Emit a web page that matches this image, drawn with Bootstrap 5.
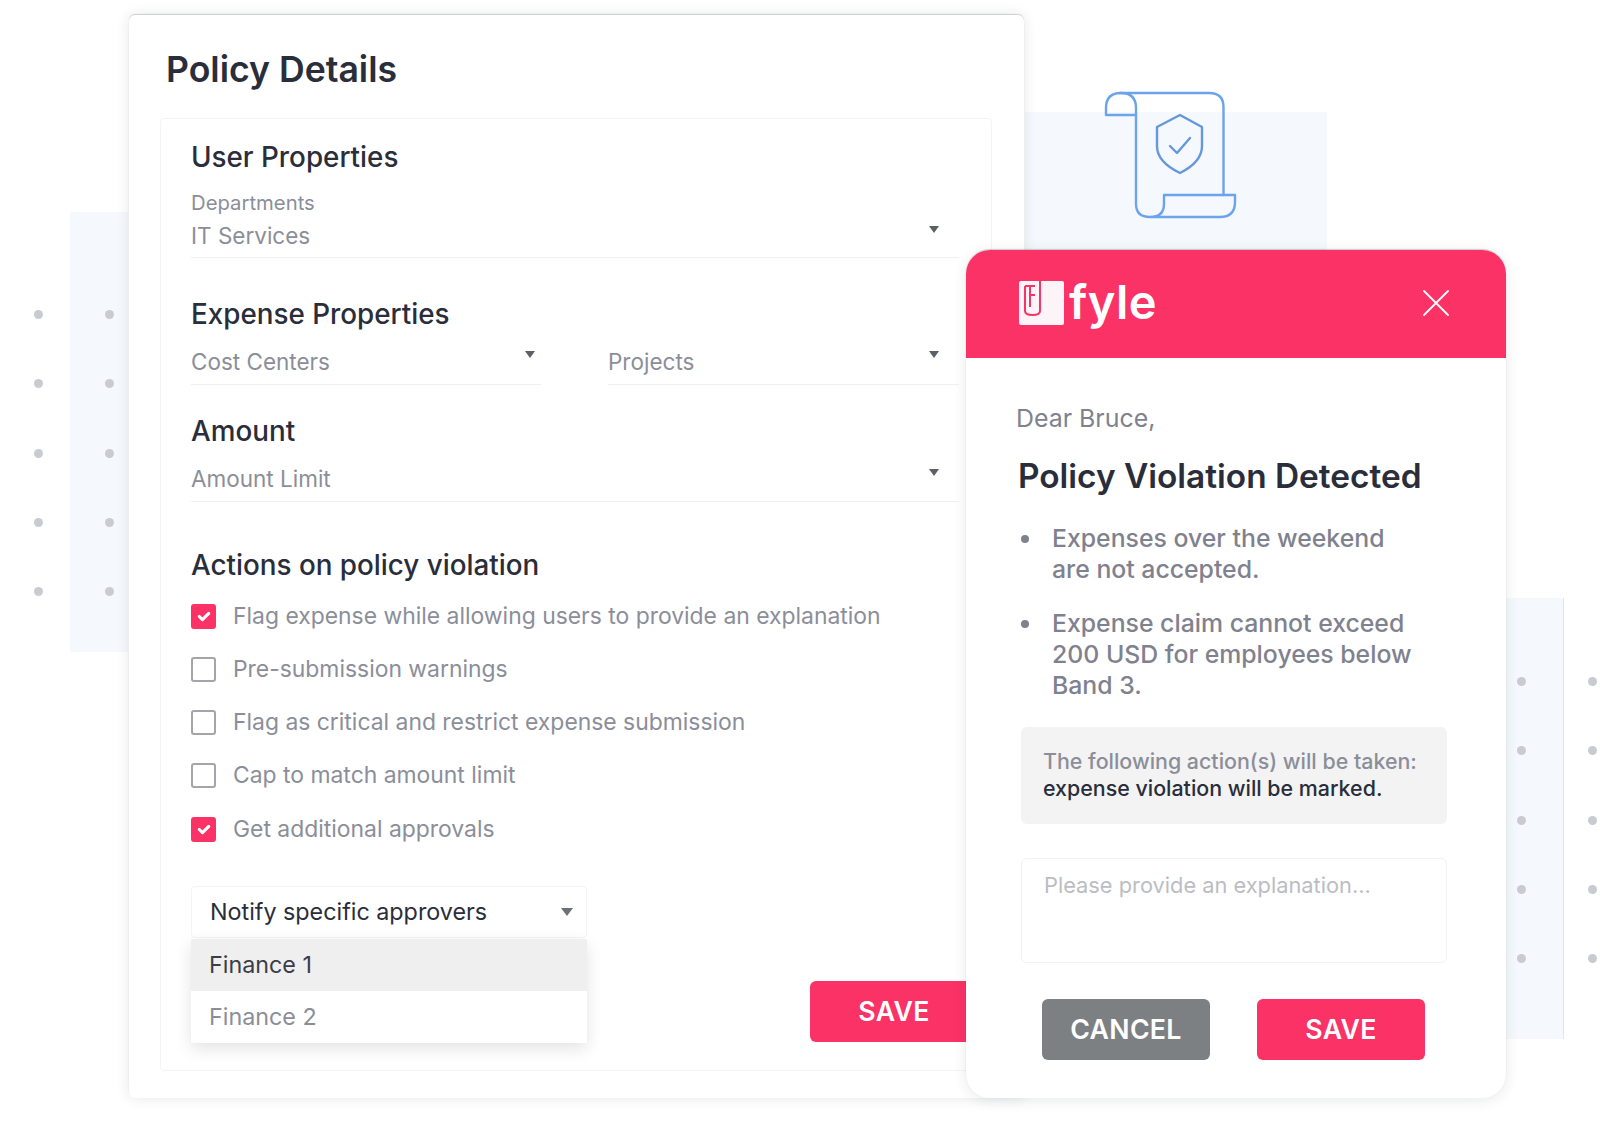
<!DOCTYPE html>
<html lang="en">
<head>
<meta charset="utf-8">
<title>Policy Details</title>
<link href="https://cdn.jsdelivr.net/npm/bootstrap@5.3.2/dist/css/bootstrap.min.css" rel="stylesheet">
<style>
body { margin: 0; background: #fff; font-family: Inter, "Noto Sans", sans-serif; color: #2a2d3a; }
.stage { position: relative; width: 1600px; height: 1132px; overflow: hidden; }

/* backdrop pieces and windows sit on a free canvas */
.strip { position: absolute; background: #f5f9fd; }
.strip-left { left: 70px; top: 212px; width: 58px; height: 440px; }
.strip-right { left: 1506px; top: 598px; width: 58px; height: 441px; border-right: 1px solid #e2e5e9; }
.strip-top { left: 1025px; top: 112px; width: 302px; height: 138px; }
.dots { position: absolute; display: grid; grid-template-columns: 9px 9px; column-gap: 62px; row-gap: 60.25px; }
.dots i { width: 9px; height: 9px; border-radius: 50%; background: #c9cbd1; display: block; }
.dots-left { left: 34px; top: 310px; }
.dots-right { left: 1517px; top: 677px; }
.scroll-art { position: absolute; left: 1100px; top: 88px; }

.policy-win { position: absolute; left: 129px; top: 15px; width: 895px; height: 1083px; background: #fff; border-radius: 6px;
  box-shadow: 0 -1px 1px rgba(30, 35, 50, .18), 0 0 14px rgba(30, 35, 50, .11); padding: 33px 32px 0 31px; }
.policy-title { font-size: 35.6px; line-height: 44px; font-weight: 600; margin: 0 0 26px 6px; color: #2a2d3a; }
.policy-box { width: 832px; height: 953px; border: 1px solid #f3f4f6; border-radius: 4px; padding: 21px 32px 0 30px; }
.sec-head { font-size: 27.8px; line-height: 34px; font-weight: 500; margin: 0; color: #2a2d3a; }
.mt-a { margin-top: 39px; }
.mt-b { margin-top: 29px; }
.mt-c { margin-top: 46px; }
.field-label { font-size: 20.3px; line-height: 26px; color: #8b8e99; margin-top: 16px; }
.field-line { display: flex; justify-content: space-between; align-items: flex-start; font-size: 22.5px; line-height: 30px; color: #8b8e99;
  padding-bottom: 7px; border-bottom: 1px solid #eef0f2; }
.field-first { margin-top: 5px; padding-bottom: 6px; }
.field-cost { width: 350px; flex: none; margin-right: 67px; }
.caret-mark { width: 0; height: 0; border-left: 5px solid transparent; border-right: 5px solid transparent; border-top: 7px solid #5c5f66; margin: 5px 20px 0 0; flex: none; }
.field-pair .caret-mark { margin-top: 4px; }
.field-cost .caret-mark { margin-right: 6px; }
.act-list { margin-top: 8px; }
.act-row { height: 53px; display: flex; align-items: center; gap: 17px; font-size: 22.9px; color: #8b8e99; }
.act-row:last-child { height: 54px; }
.act-row .form-check-input { width: 25px; height: 25px; margin: 0; flex: none; border: 2px solid #a3a5aa; border-radius: 3px; }
.act-row .form-check-input:checked { background-color: #fb3265; border-color: #fb3265; }
.notify-row { display: flex; align-items: flex-end; margin-top: 30px; }
.notify-col { width: 396px; flex: none; }
.notify-pick { height: 52px; display: flex; align-items: center; justify-content: space-between; padding: 0 13px 0 18px; font-size: 23.3px; color: #2a2d3a;
  border: 1px solid #f3f4f6; border-radius: 4px; }
.notify-pick .caret-mark { border-left-width: 6px; border-right-width: 6px; border-top-width: 8px; margin: 0; border-top-color: #6d7076; }
.notify-menu { margin-top: 1px; box-shadow: 0 6px 16px rgba(30, 35, 50, .12); border-radius: 2px; }
.notify-menu .list-group-item { height: 52px; display: flex; align-items: center; padding: 0 18px; font-size: 23.3px; border: 0; color: #8b8e99; }
.notify-menu .list-group-item.picked { background: #efefef; color: #3a3d48; }
.act-btn { width: 168px; height: 61px; padding: 0; border: 0; border-radius: 6px; font-size: 26.7px; font-weight: 600; color: #fff; letter-spacing: .3px; }
.act-btn:hover { color: #fff; }
.btn-pink { background: #fb3265; }
.btn-grey { background: #7d8083; }
.save-under { margin-left: 223px; margin-bottom: 1px; flex: none; }

.notice-win { position: absolute; left: 966px; top: 250px; width: 540px; height: 848px; background: #fff; border-radius: 24px;
  box-shadow: 0 -1px 1px rgba(30, 35, 50, .2), 0 2px 14px rgba(30, 35, 50, .1); overflow: hidden; }
.notice-head { height: 108px; background: #fb3265; display: flex; align-items: center; justify-content: space-between; padding: 0 56px 2px 53px; }
.brand { display: flex; align-items: center; gap: 5px; }
.brand-word { font-size: 47px; line-height: 44px; font-weight: 600; color: #fff; letter-spacing: .5px; margin-top: -3px; }
.notice-body { padding: 45px 59px 0 50px; }
.greet { font-size: 24.9px; line-height: 30px; color: #7f828e; }
.notice-title { font-size: 33.4px; line-height: 42px; font-weight: 600; margin: 22px 0 0 2px; white-space: nowrap; color: #2a2d3a; }
.rule-list { margin: 26px 0 0 0; padding: 0; list-style: none; font-size: 24.8px; line-height: 31px; color: #7f828e; font-weight: 500; }
.rule-list li { display: flex; margin-bottom: 23px; }
.rule-list li:last-child { margin-bottom: 0; }
.rule-dot { width: 8px; height: 8px; border-radius: 50%; background: #7f828e; flex: none; margin: 12px 23px 0 5px; }
.taken-box { margin: 26px 0 0 5px; width: 426px; height: 97px; background: #f3f3f4; border-radius: 6px; padding: 21px 10px 0 22px; font-size: 21.4px; line-height: 27px; color: #8b8e99; font-weight: 500; }
.taken-box b { font-weight: 500; color: #2a2d3a; display: block; }
.explain-box { display: block; margin: 34px 0 0 5px; width: 426px; height: 105px; border: 1px solid #f1f2f4; border-radius: 6px; padding: 13px 22px; font-size: 21.8px; line-height: 27px; resize: none; outline: 0; box-shadow: none; }
.explain-box::placeholder { color: #bcbdc3; }
.notice-btns { display: flex; gap: 47px; margin: 36px 0 0 26px; }
</style>
</head>
<body>
<div class="stage">
  <div class="strip strip-left"></div>
  <div class="strip strip-right"></div>
  <div class="strip strip-top"></div>
  <div class="dots dots-left"><i></i><i></i><i></i><i></i><i></i><i></i><i></i><i></i><i></i><i></i></div>
  <div class="dots dots-right"><i></i><i></i><i></i><i></i><i></i><i></i><i></i><i></i><i></i><i></i></div>

  <main class="policy-win">
    <h1 class="policy-title">Policy Details</h1>
    <div class="policy-box">
      <h2 class="sec-head">User Properties</h2>
      <div class="field-label">Departments</div>
      <div class="field-line field-first"><span>IT Services</span><span class="caret-mark"></span></div>

      <h2 class="sec-head mt-a">Expense Properties</h2>
      <div class="d-flex mt-3 field-pair">
        <div class="field-line field-cost"><span>Cost Centers</span><span class="caret-mark"></span></div>
        <div class="field-line flex-grow-1"><span>Projects</span><span class="caret-mark"></span></div>
      </div>

      <h2 class="sec-head mt-b">Amount</h2>
      <div class="field-line mt-3"><span>Amount Limit</span><span class="caret-mark"></span></div>

      <h2 class="sec-head mt-c">Actions on policy violation</h2>
      <div class="act-list">
        <label class="act-row"><input class="form-check-input" type="checkbox" checked>Flag expense while allowing users to provide an explanation</label>
        <label class="act-row"><input class="form-check-input" type="checkbox">Pre-submission warnings</label>
        <label class="act-row"><input class="form-check-input" type="checkbox">Flag as critical and restrict expense submission</label>
        <label class="act-row"><input class="form-check-input" type="checkbox">Cap to match amount limit</label>
        <label class="act-row"><input class="form-check-input" type="checkbox" checked>Get additional approvals</label>
      </div>

      <div class="notify-row">
        <div class="notify-col">
          <div class="notify-pick"><span>Notify specific approvers</span><span class="caret-mark"></span></div>
          <ul class="list-group notify-menu">
            <li class="list-group-item picked">Finance 1</li>
            <li class="list-group-item">Finance 2</li>
          </ul>
        </div>
        <button class="btn act-btn btn-pink save-under">SAVE</button>
      </div>
    </div>
  </main>

  <svg class="scroll-art" width="140" height="135" viewBox="1100 88 140 135" fill="none" stroke="#6ba3ee" stroke-width="2.4" stroke-linejoin="round" stroke-linecap="round">
    <path d="M1120 93H1209Q1223.5 93 1223.5 107V195"/>
    <path d="M1136 115V204Q1136 217 1150 217Q1164 217 1164 204V195H1235V202Q1235 217 1220 217H1150"/>
    <path d="M1136 115H1106V108Q1106 93 1121 93Q1136 93 1136 108V115"/>
    <path stroke="#6498dc" d="M1180 115L1202 127V146Q1202 162 1180 173Q1157 162 1157 146V127Z"/>
    <path stroke="#6498dc" d="M1170 146L1177 153L1190 138"/>
  </svg>

  <section class="notice-win">
    <div class="notice-head">
      <div class="brand">
        <svg width="45" height="44" viewBox="0 0 45 44">
          <rect width="45" height="44" rx="2" fill="#fdf4f7"/>
          <path d="M6 5V30Q6 34 13.5 34Q21 34 21 30V0" fill="none" stroke="#fb3265" stroke-width="2"/>
          <path d="M6 5H16M11 5V26M11 14H16" fill="none" stroke="#fb3265" stroke-width="2"/>
        </svg>
        <span class="brand-word">fyle</span>
      </div>
      <button class="btn p-0 border-0 d-flex" aria-label="Close">
        <svg width="28" height="28" viewBox="0 0 28 28" stroke="#fff" stroke-width="1.8" stroke-linecap="round"><path d="M2 2L26 26M26 2L2 26"/></svg>
      </button>
    </div>
    <div class="notice-body">
      <div class="greet">Dear Bruce,</div>
      <h2 class="notice-title">Policy Violation Detected</h2>
      <ul class="rule-list">
        <li><span class="rule-dot"></span><span>Expenses over the weekend<br>are not accepted.</span></li>
        <li><span class="rule-dot"></span><span>Expense claim cannot exceed<br>200 USD for employees below<br>Band 3.</span></li>
      </ul>
      <div class="taken-box">The following action(s) will be taken:<b>expense violation will be marked.</b></div>
      <textarea class="form-control explain-box" placeholder="Please provide an explanation..."></textarea>
      <div class="notice-btns">
        <button class="btn act-btn btn-grey">CANCEL</button>
        <button class="btn act-btn btn-pink">SAVE</button>
      </div>
    </div>
  </section>
</div>
<script src="https://cdn.jsdelivr.net/npm/bootstrap@5.3.2/dist/js/bootstrap.bundle.min.js"></script>
</body>
</html>
